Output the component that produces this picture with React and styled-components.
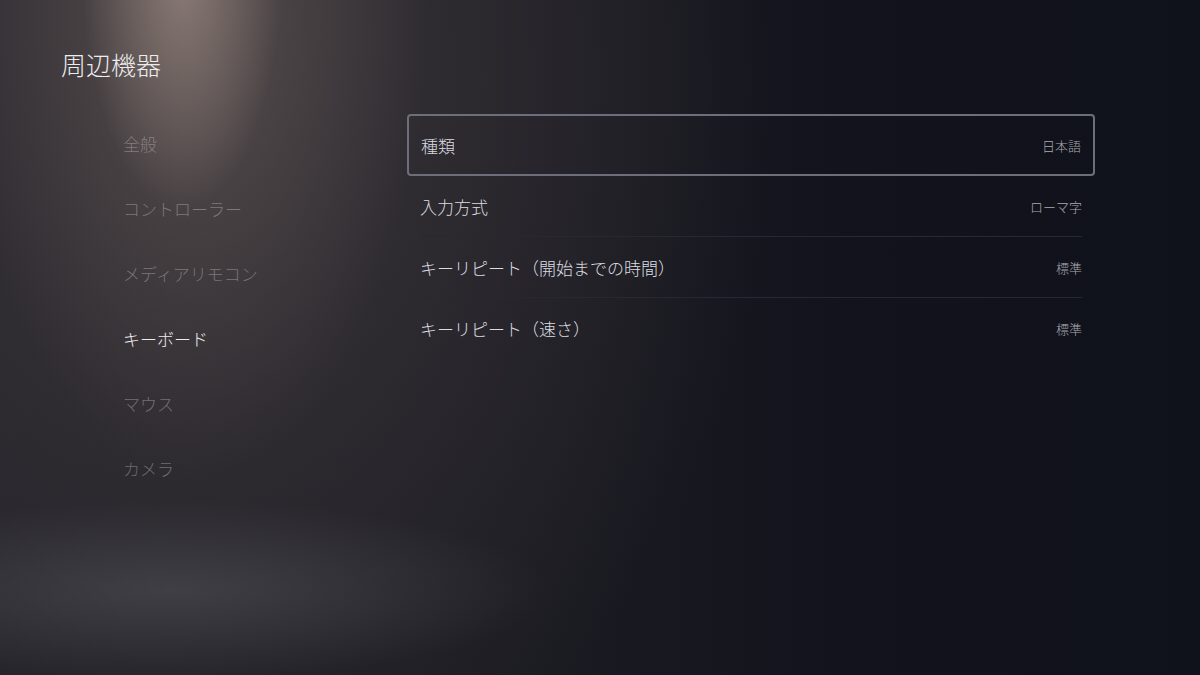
import React from "react";
import styled, { createGlobalStyle } from "styled-components";

const GlobalStyle = createGlobalStyle`
  html, body {
    margin: 0;
    padding: 0;
    background: #11131c;
  }
  * {
    box-sizing: border-box;
  }
`;

const Screen = styled.div`
  width: 1200px;
  height: 675px;
  overflow: hidden;
  font-family: "Noto Sans CJK JP", "Noto Sans", sans-serif;
  font-weight: 300;
  color: #e6e6e8;
  background:
    radial-gradient(ellipse 100px 240px at 182px -30px, rgba(160, 142, 134, 0.7), rgba(160, 142, 134, 0) 100%),
    radial-gradient(ellipse 240px 500px at 190px -20px, rgba(118, 104, 100, 0.5), rgba(118, 104, 100, 0) 100%),
    radial-gradient(ellipse 380px 90px at 170px 590px, rgba(90, 92, 98, 0.45), rgba(90, 92, 98, 0) 100%),
    radial-gradient(ellipse 560px 760px at 220px 80px, rgba(60, 55, 59, 0.9), rgba(60, 55, 59, 0) 100%),
    linear-gradient(90deg, #24232a 0%, #1b1b22 45%, #12131c 70%, #10121b 100%);
`;

const Title = styled.h1`
  margin: 0;
  padding: 47px 0 0 61px;
  font-size: 25px;
  line-height: 34px;
  font-weight: 300;
  color: #ececee;
`;

const Content = styled.div`
  display: flex;
  margin-top: 30px;
`;

const Nav = styled.nav`
  width: 407px;
  padding-left: 123px;
  display: flex;
  flex-direction: column;
`;

const NavItem = styled.div`
  height: 65px;
  line-height: 65px;
  font-size: 17px;
  color: ${(p) => (p.active ? "#ececef" : "rgba(200, 200, 205, 0.42)")};
`;

const List = styled.div`
  width: 688px;
  margin-top: 3px;
  display: flex;
  flex-direction: column;
`;

const Row = styled.div`
  height: ${(p) => (p.selected ? "62px" : "61px")};
  display: flex;
  align-items: center;
  justify-content: space-between;
  margin: ${(p) => (p.selected ? "0" : "0 13px")};
  padding: ${(p) => (p.selected ? "0 12px" : "0")};
  border: ${(p) => (p.selected ? "2px solid #6c6f79" : "none")};
  border-radius: ${(p) => (p.selected ? "4px" : "0")};
  border-bottom: ${(p) =>
    p.selected ? "2px solid #6c6f79" : p.divider ? "1px solid #262833" : "none"};
`;

const Label = styled.span`
  font-size: 17px;
  color: #dcdce0;
`;

const Value = styled.span`
  font-size: 13px;
  color: #a9aab0;
`;

const navItems = ["全般", "コントローラー", "メディアリモコン", "キーボード", "マウス", "カメラ"];

const settings = [
  { label: "種類", value: "日本語" },
  { label: "入力方式", value: "ローマ字" },
  { label: "キーリピート（開始までの時間）", value: "標準" },
  { label: "キーリピート（速さ）", value: "標準" },
];

export default function App() {
  return (
    <>
      <GlobalStyle />
      <Screen>
        <Title>周辺機器</Title>
        <Content>
          <Nav>
            {navItems.map((item) => (
              <NavItem key={item} active={item === "キーボード"}>
                {item}
              </NavItem>
            ))}
          </Nav>
          <List>
            {settings.map((s, i) => (
              <Row
                key={s.label}
                selected={i === 0}
                divider={i > 0 && i < settings.length - 1}
              >
                <Label>{s.label}</Label>
                <Value>{s.value}</Value>
              </Row>
            ))}
          </List>
        </Content>
      </Screen>
    </>
  );
}
